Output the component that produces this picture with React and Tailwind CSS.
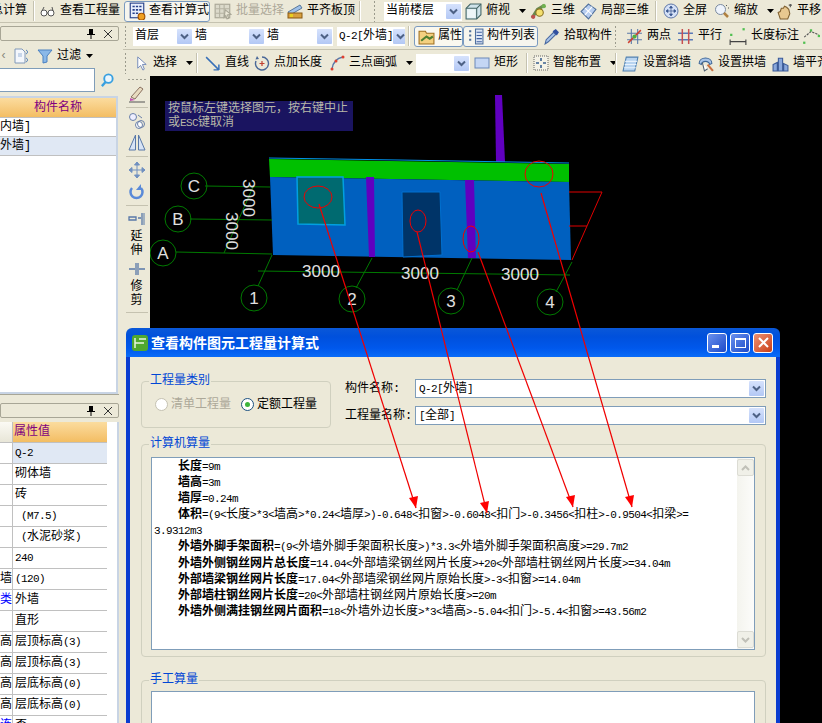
import React from "react";

const CJK = /([\u3000-\u9fff\uff00-\uffef]+)/;
function T({ s }) {
  return s.split(CJK).map((p, i) =>
    CJK.test(p) ? <span key={i}>{p}</span> : <span key={i} className="text-[11px] tracking-[-0.6px]">{p}</span>
  );
}

function Chev({ tall }) {
  return (
    <span className={`shrink-0 w-[15px] flex items-center justify-center bg-gradient-to-b from-[#d6e2fc] to-[#b3c8f5] rounded-[1px] ${tall ? "h-[16px]" : "h-[15px]"}`}>
      <svg width="9" height="7" viewBox="0 0 9 7"><path d="M1 1.5 L4.5 5 L8 1.5" fill="none" stroke="#4d6185" strokeWidth="2" /></svg>
    </span>
  );
}

function Sel({ w, children }) {
  return (
    <div className={`h-[19px] shrink-0 bg-white flex items-center justify-between pl-[2px] pr-[1px] overflow-hidden whitespace-nowrap ${w}`}>
      <span className="text-[12px]">{children}</span>
      <Chev />
    </div>
  );
}

function Grip() {
  return <div className="w-[3px] h-[22px] shrink-0 bg-[radial-gradient(circle,#9a9a8c_1px,transparent_1px)] bg-[length:3px_4px]" />;
}
function Sep() {
  return <div className="w-[2px] h-[20px] shrink-0 bg-[#c5c2b0] border-r border-white" />;
}
function Caret() {
  return <svg width="7" height="4" viewBox="0 0 7 4" className="shrink-0"><path d="M0 0H7L3.5 4Z" fill="#000" /></svg>;
}

const I = ({ children, s = 16 }) => <svg width={s} height={s} viewBox="0 0 16 16" className="shrink-0">{children}</svg>;

const Ic = {
  glasses: <I><circle cx="4" cy="10" r="3" fill="#fff" stroke="#555" /><circle cx="11" cy="10" r="3" fill="#fff" stroke="#555" /><path d="M7 10h1M2 8l2-4M13 8l-1-4" stroke="#555" fill="none" /></I>,
  calc: <I s={18}><rect x="2" y="1" width="12" height="13" fill="#e8eefc" stroke="#27408b" /><path d="M4 4h8M4 7h8M4 10h5" stroke="#27408b" strokeWidth="1.5" strokeDasharray="2 1" /><circle cx="12" cy="13" r="3" fill="#f0a020" stroke="#a05000" /></I>,
  batch: <I s={18}><rect x="1" y="2" width="13" height="12" fill="#dcdacb" stroke="#a8a696" /><path d="M1 6h13M1 10h13M5 2v12M9 2v12" stroke="#b5b3a3" /><path d="M10 7l5 4-3 .5 1 3-1.5.5-1-3-1.5 1.5Z" fill="#ece9d8" stroke="#a8a696" /></I>,
  align: <I><path d="M1 9 L13 2 L15 5 L3 12Z" fill="#9fc0e8" stroke="#58789c" /><rect x="1" y="10" width="14" height="5" fill="#d8a040" stroke="#8a5a10" /><rect x="3" y="11" width="3" height="3" fill="#e8d020" /></I>,
  top: <I s={17}><path d="M1 5 L5 1 H15 V11 L11 15 H1Z" fill="#cfe3ea" stroke="#466" /><path d="M1 5 H11 V15 M11 5 L15 1" fill="none" stroke="#466" /><rect x="2" y="6" width="8" height="8" fill="#eef6f8" /></I>,
  three: <I s={17}><path d="M2 14 L7 6 L14 2" stroke="#6a8a50" strokeWidth="3" fill="none" /><circle cx="9" cy="9" r="3.5" fill="#f4e070" stroke="#887020" /><circle cx="13" cy="3" r="2" fill="#70b050" /><circle cx="3" cy="13" r="2" fill="#c05050" /></I>,
  local: <I s={17}><path d="M8 1 L15 6 L8 15 L1 8Z" fill="#b8cef0" stroke="#50709c" /><path d="M4.5 4.5 L11.5 11 M11.5 3.5 L4.5 11.5" stroke="#fff" /></I>,
  full: <I s={16}><circle cx="8" cy="8" r="7" fill="#d4e0f6" stroke="#6078a8" /><path d="M8 3v10M3 8h10M8 3l-1.5 2h3ZM8 13l-1.5-2h3ZM3 8l2-1.5v3ZM13 8l-2-1.5v3Z" stroke="#3a5890" fill="#3a5890" strokeWidth=".7" /></I>,
  zoom: <I s={16}><circle cx="6.5" cy="6.5" r="5" fill="#eef3fb" stroke="#7a8aa0" /><path d="M10 10l4 4" stroke="#b08040" strokeWidth="2.5" /><path d="M12 2l1 1M14 5h1" stroke="#555" /></I>,
  pan: <I s={17}><path d="M4 15 L2 9 L4 8 L5 5 L7 5 L8 3 L10 4 L12 6 L13 10 L11 15Z" fill="#e8c890" stroke="#806030" /><path d="M12 2h3M13.500 1v3" stroke="#555" /></I>,
  prop: <I s={17}><path d="M1 3h6l1 2h7v10H1Z" fill="#f4d080" stroke="#a07020" /><path d="M3 12l5-4 3 2 3-2" stroke="#508030" strokeWidth="2" fill="none" /></I>,
  list: <I s={17}><path d="M2 3h2M2 7h2M2 11h2" stroke="#50709c" strokeWidth="2" /><rect x="8" y="1" width="7" height="14" fill="#dce6f6" stroke="#50709c" /><path d="M9 4h5M9 7h5M9 10h5M9 13h5" stroke="#4060a0" /></I>,
  pick: <I s={17}><path d="M2 15 L3 11 L10 4 L12 6 L5 13Z" fill="#a8c4ea" stroke="#4868a0" /><path d="M9 3 L13 7 L15 4 L12 1Z" fill="#3050a0" /></I>,
  two: <I s={17}><path d="M1 5h14M1 11h14M5 1v14M11 1v14" stroke="#5878a8" /><path d="M2 14 L14 2" stroke="#d04030" strokeWidth="1.4" /><circle cx="8" cy="8" r="2" fill="#50b040" /></I>,
  para: <I s={17}><path d="M1 5h14M1 11h14" stroke="#5878b8" strokeWidth="1.4" /><path d="M5 1v14M11 1v14" stroke="#c85050" strokeWidth="1.4" /></I>,
  dim: <I s={18}><path d="M1 13h14M1 11v5M15 11v5" stroke="#444" /><rect x="1" y="6" width="2" height="2" fill="#50c050" /><rect x="12" y="1" width="2" height="2" fill="#50c050" /></I>,
  dim2: <I s={18}><path d="M2 9 L8 4 L15 7" stroke="#555" strokeDasharray="2 1" fill="none" /><rect x="1" y="13" width="2" height="2" fill="#50c050" /><rect x="7" y="2" width="2" height="2" fill="#50c050" /><rect x="14" y="7" width="2" height="2" fill="#50c050" /></I>,
  sel: <I s={15}><path d="M4 1 V13 L7 10 L9.500 15 L11 14 L9 9 H13Z" fill="#fff" stroke="#7088b8" /></I>,
  line: <I s={17}><path d="M2 2 L14 14 M14 14v-5M14 14h-5" stroke="#3870b8" strokeWidth="1.4" fill="none" /></I>,
  ptl: <I s={16}><path d="M8 2a6.500 6.500 0 1 1-6 4" fill="none" stroke="#4a6898" strokeWidth="1.4" /><path d="M3 1l2 3-3.500.5Z" fill="#4a6898" /><path d="M8 6v5M5.500 8.500h5" stroke="#c04030" strokeWidth="1.2" /></I>,
  arc: <I s={16}><path d="M3 14 C4 7 8 3 14 2" fill="none" stroke="#5878a8" strokeWidth="1.4" /><circle cx="3" cy="14" r="1.500" fill="#e04030" /><circle cx="7" cy="6" r="1.500" fill="#e04030" /><circle cx="14" cy="2" r="1.500" fill="#e04030" /></I>,
  rect: <I s={16}><rect x="1" y="3" width="14" height="10" fill="#c4d6f4" stroke="#6a88b8" /></I>,
  smart: <I s={16}><rect x="1" y="1" width="14" height="14" fill="#f4f2e6" stroke="#666" strokeDasharray="1 1" /><path d="M8 3v3M8 10v3M3 8h3M10 8h3" stroke="#3a6090" strokeWidth="1.6" /></I>,
  slant: <I s={17}><path d="M1 15 L4 2 H15 L12 15Z" fill="#b8d4f0" stroke="#5080b0" /><path d="M3 6h11M2.500 9h11M2 12h11" stroke="#e8f2fc" /></I>,
  arch: <I s={17}><path d="M2 8 C2 1 14 1 14 8 L12 9 C11 5 5 5 4 9Z" fill="#a8c4e8" stroke="#406898" /><path d="M5 7 L7 15 L10 13" fill="#fff" stroke="#506070" /><path d="M10 9l5 6" stroke="#c87040" strokeWidth="2" /></I>,
  flush: <I s={17}><path d="M1 15V9l4-2v8ZM6 15V3h4v12ZM11 15V8l4 2v5Z" fill="#8aa8dc" stroke="#3a5a98" /></I>,
  copy: <I s={16}><path d="M2 1h7l3 3v11H2Z" fill="#f4f7fc" stroke="#8098b8" /><path d="M5 5h4v4H5Z" fill="#c8d6ea" /><path d="M13 2c2 1 2 3 0 4M13 10c2 1 2 3 0 4" stroke="#3a70b8" fill="none" /></I>,
  filter: <I s={16}><path d="M1 2h14L10 8v6l-4 1V8Z" fill="#8ab8e8" stroke="#4a80c0" /></I>,
  search: <I s={15}><circle cx="9" cy="6" r="4.500" fill="#eaf6fe" stroke="#38a0e0" strokeWidth="2" /><path d="M6 9.500 L2 14" stroke="#38a0e0" strokeWidth="2.5" /></I>,
};

function Tool({ icon, children, gray, w, caret }) {
  return (
    <div className={`h-[20px] shrink-0 flex items-center gap-[4px] whitespace-nowrap text-[12px] ${gray ? "text-[#aca899]" : "text-black"} ${w}`}>
      {icon}
      <span>{children}</span>
      {caret && <span className="ml-[5px] flex"><Caret /></span>}
    </div>
  );
}
function Active({ icon, children, w, warm }) {
  return (
    <div className={`h-[21px] shrink-0 flex items-center gap-[3px] px-[3px] rounded-[3px] border border-[#7a9ac0] whitespace-nowrap text-[12px] ${warm ? "bg-[#faf8ef]" : "bg-[#f6f5ee]"} ${w}`}>
      {icon}
      <span>{children}</span>
    </div>
  );
}

function PanelHead() {
  return (
    <div className="h-[15px] shrink-0 flex items-center justify-end gap-[9px] pr-[6px] bg-[#ece9d8] border border-[#a8a696] rounded-[2px]">
      <svg width="8" height="10" viewBox="0 0 8 10"><path d="M2 0h4v5h2v1H4.500v4h-1V6H0V5h2Z" fill="#000" /></svg>
      <svg width="8" height="8" viewBox="0 0 8 8"><path d="M0 0L8 8M8 0L0 8" stroke="#333" /></svg>
    </div>
  );
}

const propRows = [
  ["", "Q-2", true],
  ["", "砌体墙"],
  ["", "砖"],
  ["", " (M7.5)"],
  ["", " (水泥砂浆)"],
  ["", "240"],
  ["墙", "(120)"],
  ["类", "外墙", false, true],
  ["", "直形"],
  ["高", "层顶标高(3)"],
  ["高", "层顶标高(3)"],
  ["高", "层底标高(0)"],
  ["高", "层底标高(0)"],
  ["连", "否", false, true],
];

function LeftPanel() {
  return (
    <div className="w-[120px] shrink-0 flex flex-col pr-[1px] pt-[3px]">
      <PanelHead />
      <div className="h-[354px] shrink-0 flex flex-col border-b border-[#a8a696]">
        <div className="h-[25px] flex items-center shrink-0 pt-[4px]">
          <span className="w-[13px] text-[#8a8a80] text-[12px] leading-none">‹</span>
          <span className="w-[24px] flex">{Ic.copy}</span>
          {Ic.filter}
          <span className="ml-[4px] text-[12px]">过滤</span>
          <span className="ml-[5px] flex"><Caret /></span>
        </div>
        <div className="flex items-center h-[24px] shrink-0 mt-[2px]">
          <div className="w-[95px] h-[24px] bg-white border border-[#7f9db9] border-l-0" />
          <span className="ml-[5px] flex">{Ic.search}</span>
        </div>
        <div className="mt-[4px] w-[118px] flex-1 bg-white border-2 border-l-0 border-[#c8d4e4] flex flex-col">
          <div className="h-[20px] shrink-0 bg-gradient-to-b from-[#fbdc9e] to-[#f3bd62] text-[#800080] text-[12px] flex items-center justify-center border-b border-[#c0c0c0]">构件名称</div>
          <div className="h-[19px] shrink-0 text-[12px] flex items-center border-b border-[#c0c0c0] whitespace-nowrap">内墙]</div>
          <div className="h-[19px] shrink-0 text-[12px] flex items-center border-b border-[#c0c0c0] bg-[#e0e8f4] whitespace-nowrap">外墙]</div>
        </div>
      </div>
      <div className="mt-[8px]"><PanelHead /></div>
      <div className="flex-1 min-h-0 mt-[4px] bg-white border-r-2 border-[#c8d4e4] overflow-hidden">
        <div className="w-[107px] flex h-[21px] border-b border-[#c0c0c0] text-[12px]">
          <div className="w-[13px] shrink-0 bg-gradient-to-b from-[#fbfaf4] to-[#e8e6d8] border-r border-[#c0c0c0]" />
          <div className="flex-1 bg-gradient-to-b from-[#fbdc9e] to-[#f3bd62] text-[#800080] flex items-center pl-[1px]">属性值</div>
        </div>
        {propRows.map(([a, b, sel, blue], i) => (
          <div key={i} className="w-[107px] flex h-[21px] border-b border-[#c0c0c0] text-[12px] overflow-hidden">
            <div className={`w-[13px] shrink-0 border-r border-[#c0c0c0] flex items-center justify-end overflow-hidden ${blue ? "text-[#0000ff]" : "text-black"}`}>{a}</div>
            <div className={`flex-1 flex items-center pl-[2px] whitespace-pre ${sel ? "bg-[#e0e8f4]" : ""}`}><span><T s={b} /></span></div>
          </div>
        ))}
      </div>
    </div>
  );
}

function VBar() {
  const D = () => <div className="w-[22px] h-[1px] bg-[#c5c2b0] shrink-0" />;
  return (
    <div className="w-[27px] shrink-0 flex flex-col items-center pt-[2px] gap-[4px] text-[12px] leading-[14px]">
      <div className="h-[3px] w-[20px] bg-[radial-gradient(circle,#9a9a8c_1px,transparent_1px)] bg-[length:4px_3px]" />
      <svg width="18" height="18" viewBox="0 0 18 18"><path d="M3 12 L12 2 L15 4 L7 14Z" fill="#e8dcc0" stroke="#8a7060" /><path d="M2 13 L7 15 L2 16Z" fill="#c050b0" /><path d="M1 17h16" stroke="#555" /></svg>
      <D />
      <svg width="18" height="18" viewBox="0 0 18 18"><circle cx="5" cy="5" r="3.500" fill="#eef" stroke="#6a80a8" /><circle cx="11" cy="13" r="3.500" fill="#fff" stroke="#6a80a8" /><circle cx="13" cy="12" r="3.500" fill="none" stroke="#6a80a8" /><path d="M10 3l4 3" stroke="#6a80a8" /></svg>
      <svg width="18" height="18" viewBox="0 0 18 18"><path d="M7.500 1 V16 H1ZM10.500 1 V16 H17Z" fill="#d8e4f6" stroke="#5878a8" /></svg>
      <D />
      <svg width="18" height="18" viewBox="0 0 18 18"><path d="M9 1v16M1 9h16M9 1l-2.500 3h5ZM9 17l-2.500-3h5ZM1 9l3-2.500v5ZM17 9l-3-2.500v5Z" fill="#7090c0" stroke="#7090c0" /></svg>
      <svg width="18" height="18" viewBox="0 0 18 18"><path d="M4 5a6 6 0 1 0 9-0" fill="none" stroke="#5a8ad8" strokeWidth="2.5" /><path d="M13 1v6h-5Z" fill="#5a8ad8" /></svg>
      <D />
      <svg width="18" height="14" viewBox="0 0 18 14" className="mt-[2px]"><path d="M1 5h7v3H1ZM10 6h3M14 1v12" stroke="#5878a8" fill="none" strokeWidth="1.300" /><path d="M16 1v12" stroke="#5878a8" /></svg>
      <div className="text-center w-[14px]">延伸</div>
      <svg width="18" height="14" viewBox="0 0 18 14"><path d="M1 7h6M11 7h6M8 1v12M10 1v12" stroke="#5878a8" strokeWidth="1.300" /></svg>
      <div className="text-center w-[14px]">修剪</div>
      <D />
    </div>
  );
}

function Canvas() {
  const green = "#007a00";
  const labels = [["C", 194, 186], ["B", 178, 219], ["A", 163, 253], ["1", 254, 298], ["2", 352, 299], ["3", 451, 301], ["4", 550, 302]];
  return (
    <div className="relative flex-1 bg-black">
      <div className="absolute left-[15px] top-[25px] w-[188px] h-[30px] bg-[#1a1460] text-[#b8b8a8] text-[12px] leading-[14px] pl-[3px] pt-[1px]">
        按鼠标左键选择图元，按右键中止<br />或<span className="text-[11px] tracking-[-0.6px]">ESC</span>键取消
      </div>
      <svg className="absolute left-0 top-0" width="672" height="647" viewBox="150 76 672 647">
        <path d="M495 95H502L505 162H496Z" fill="#6000c0" />
        <path d="M269 159L569 164V182L270 177Z" fill="#00c000" />
        <path d="M269 158L400 160L569 163" fill="none" stroke="#0090e8" />
        <path d="M270 177L569 182L571 260L273 255Z" fill="#0060bf" />
        <path d="M366 177H374L375 257H369Z" fill="#6000c0" />
        <path d="M465 180H474L476 258H468Z" fill="#6000c0" />
        <path d="M297 177H343L345 225L298 224Z" fill="#006a70" stroke="#00a0e0" strokeWidth="1.500" />
        <path d="M402 192H440L442 255L403 257Z" fill="#003468" stroke="#0070d0" />
        <path d="M569 192H602L572 260M569 226H587" fill="none" stroke="#e00000" />
        <path d="M205 186L270 187M190 219L272 220M176 252L272 254M258 286L272 255M356 288L372 258M457 290L472 258M556 292L572 262M258 271L570 275M224 253L253 187" stroke={green} fill="none" />
        {labels.map(([t, x, y]) => (
          <g key={t}>
            <circle cx={x} cy={y} r="13" fill="none" stroke={green} />
            <text x={x} y={y + 6} textAnchor="middle" fontSize="17" fill="#e0e0e0" fontFamily="Liberation Sans">{t}</text>
          </g>
        ))}
        {[[321, 277], [420, 279], [520, 280]].map(([x, y]) => (
          <text key={x} x={x} y={y} textAnchor="middle" fontSize="17" fill="#e0e0e0" fontFamily="Liberation Sans">3000</text>
        ))}
        <text transform="translate(226 231) rotate(90)" textAnchor="middle" fontSize="17" fill="#e0e0e0" fontFamily="Liberation Sans">3000</text>
        <text transform="translate(243 198) rotate(90)" textAnchor="middle" fontSize="17" fill="#e0e0e0" fontFamily="Liberation Sans">3000</text>
      </svg>
    </div>
  );
}

function Radio({ on, children }) {
  return (
    <div className={`flex items-center gap-[3px] text-[12px] ${on ? "text-black" : "text-[#aca899]"}`}>
      <span className={`w-[13px] h-[13px] rounded-full bg-white border flex items-center justify-center ${on ? "border-[#1c5180]" : "border-[#c5c2b2]"}`}>
        {on && <span className="w-[5px] h-[5px] rounded-full bg-[#3cb43c]" />}
      </span>
      {children}
    </div>
  );
}

function Group({ label, className, children }) {
  return (
    <div className={`relative border border-[#d0d0bf] rounded-[4px] ${className}`}>
      <span className="absolute left-[7px] top-[-8px] bg-[#ece9d8] text-[#0046d5] text-[12px] leading-[14px] px-[1px]">{label}</span>
      {children}
    </div>
  );
}

function DSelect({ children }) {
  return (
    <div className="w-[351px] h-[19px] bg-white border border-[#7f9db9] flex items-center justify-between pl-[3px] pr-[1px] text-[12px]">
      <span><T s={children} /></span>
      <Chev />
    </div>
  );
}

const calcLines = [
  ["长度", "=9m"],
  ["墙高", "=3m"],
  ["墙厚", "=0.24m"],
  ["体积", "=(9<长度>*3<墙高>*0.24<墙厚>)-0.648<扣窗>-0.6048<扣门>-0.3456<扣柱>-0.9504<扣梁>="],
  ["", "3.9312m3"],
  ["外墙外脚手架面积", "=(9<外墙外脚手架面积长度>)*3.3<外墙外脚手架面积高度>=29.7m2"],
  ["外墙外侧钢丝网片总长度", "=14.04<外部墙梁钢丝网片长度>+20<外部墙柱钢丝网片长度>=34.04m"],
  ["外部墙梁钢丝网片长度", "=17.04<外部墙梁钢丝网片原始长度>-3<扣窗>=14.04m"],
  ["外部墙柱钢丝网片长度", "=20<外部墙柱钢丝网片原始长度>=20m"],
  ["外墙外侧满挂钢丝网片面积", "=18<外墙外边长度>*3<墙高>-5.04<扣门>-5.4<扣窗>=43.56m2"],
];

function Dialog() {
  const btn = "w-[20px] h-[20px] rounded-[3px] border border-white flex items-center justify-center";
  return (
    <div className="absolute left-[126px] top-[328px] w-[654px] h-[395px] flex flex-col">
      <div className="h-[29px] shrink-0 rounded-t-[6px] bg-[linear-gradient(#0a58d8,#0050dc_30%,#0058ec_70%,#0a6cf8)] flex items-center pl-[6px] pr-[6px]">
        <svg width="16" height="16" viewBox="0 0 16 16"><rect width="16" height="16" rx="3" fill="#50a830" /><path d="M3 3v10M3 8h9M7 4h7" stroke="#e8f4e0" strokeWidth="1.500" /></svg>
        <span className="ml-[3px] pt-[3px] text-white text-[14px] leading-[16px] font-bold flex-1 whitespace-nowrap">查看构件图元工程量计算式</span>
        <div className="flex gap-[3px] mr-[1px]">
          <div className={`${btn} bg-gradient-to-br from-[#6a90ee] to-[#1c48c8]`}><span className="w-[7px] h-[3px] bg-white mt-[8px] mr-[3px]" /></div>
          <div className={`${btn} bg-gradient-to-br from-[#6a90ee] to-[#1c48c8]`}><span className="w-[11px] h-[10px] border border-white border-t-2" /></div>
          <div className={`${btn} bg-gradient-to-br from-[#ee9070] to-[#c83c10]`}><svg width="11" height="11" viewBox="0 0 11 11"><path d="M1 1L10 10M10 1L1 10" stroke="#fff" strokeWidth="2" /></svg></div>
        </div>
      </div>
      <div className="flex-1 min-h-0 bg-[#ece9d8] border-x-[4px] border-x-[#0a3cd0] overflow-hidden pl-[11px]">
        <div className="flex mt-[24px]">
          <Group label="工程量类别" className="w-[190px] h-[47px] flex items-center pl-[13px] gap-[10px]">
            <Radio>清单工程量</Radio>
            <Radio on>定额工程量</Radio>
          </Group>
          <div className="ml-[14px] mt-[-2px] flex flex-col gap-[8px]">
            <div className="flex items-center text-[12px]"><span className="w-[70px]">构件名称:</span><DSelect>Q-2[外墙]</DSelect></div>
            <div className="flex items-center text-[12px]"><span className="w-[70px]">工程量名称:</span><DSelect>[全部]</DSelect></div>
          </div>
        </div>
        <Group label="计算机算量" className="w-[625px] h-[213px] mt-[16px] pl-[9px] pt-[12px]">
          <div className="w-[604px] h-[193px] bg-white border border-[#7f9db9] flex">
            <div className="flex-1 min-w-0 pl-[2px] pt-[1px] text-[12px] leading-[16px] whitespace-nowrap overflow-hidden text-black">
              {calcLines.map(([b, r], i) => (
                <div key={i} className={`h-[16.1px] ${b ? "pl-[24px]" : ""}`}>
                  {b && <span className="font-bold">{b}</span>}
                  <T s={r} />
                </div>
              ))}
            </div>
            <div className="w-[17px] shrink-0 bg-gradient-to-r from-[#f4f4ee] to-[#fcfcfa] flex flex-col justify-between py-[1px]">
              <div className="h-[17px] bg-[#f0f0e8] border border-[#dcdcd4] rounded-[2px] flex items-center justify-center"><svg width="9" height="6" viewBox="0 0 9 6"><path d="M1 5L4.500 1.500L8 5" fill="none" stroke="#c0c0b8" strokeWidth="2" /></svg></div>
              <div className="h-[17px] bg-[#f0f0e8] border border-[#dcdcd4] rounded-[2px] flex items-center justify-center"><svg width="9" height="6" viewBox="0 0 9 6"><path d="M1 1L4.500 4.500L8 1" fill="none" stroke="#c0c0b8" strokeWidth="2" /></svg></div>
            </div>
          </div>
        </Group>
        <Group label="手工算量" className="w-[625px] h-[70px] mt-[23px] pl-[9px] pt-[10px]">
          <div className="w-[604px] h-[60px] bg-white border border-[#7f9db9]" />
        </Group>
      </div>
    </div>
  );
}

function Arrows() {
  const lines = [
    [319, 204, 416, 508],
    [417, 232, 487, 513],
    [478, 252, 573, 507],
    [541, 193, 632, 507],
  ];
  return (
    <svg className="absolute left-0 top-0 pointer-events-none" width="822" height="723" viewBox="0 0 822 723">
      {lines.map(([x1, y1, x2, y2], i) => (
        <g key={i}>
          <path d={`M${x1} ${y1}L${x2} ${y2}`} stroke="#f00000" strokeWidth="1.200" />
          <path d={`M${x2} ${y2}l-7 -10l9 -2Z`} fill="#ff0000" />
        </g>
      ))}
      <ellipse cx="318" cy="197" rx="14" ry="11" fill="none" stroke="#f00000" />
      <ellipse cx="418" cy="221" rx="8" ry="11" fill="none" stroke="#f00000" />
      <ellipse cx="471" cy="239" rx="8" ry="13" fill="none" stroke="#f00000" />
      <ellipse cx="539" cy="174" rx="14" ry="13" fill="none" stroke="#f00000" />
    </svg>
  );
}

export default function App() {
  return (
    <div className="relative w-[822px] h-[723px] overflow-hidden bg-[#ece9d8] text-black font-['Liberation_Mono','Noto_Sans_CJK_SC',sans-serif] flex flex-col">
      <div className="h-[23px] shrink-0 flex items-center border-b border-[#c5c2b0] overflow-hidden">
        <div className="w-[33px] shrink-0 overflow-hidden"><div className="ml-[-9px] text-[12px] whitespace-nowrap">总计算</div></div>
        <Sep />
        <div className="w-[5px] shrink-0" />
        <Tool icon={Ic.glasses} w="w-[84px]">查看工程量</Tool>
        <Active icon={Ic.calc} w="w-[86px]">查看计算式</Active>
        <div className="w-[4px] shrink-0" />
        <Tool icon={Ic.batch} gray w="w-[73px]">批量选择</Tool>
        <Tool icon={Ic.align} w="w-[72px]">平齐板顶</Tool>
        <Sep />
        <div className="w-[15px] shrink-0 flex justify-end"><Grip /></div>
        <div className="w-[8px] shrink-0" />
        <Sel w="w-[78px]">当前楼层</Sel>
        <div className="w-[3px] shrink-0" />
        <Tool icon={Ic.top} w="w-[65px]" caret>俯视</Tool>
        <Tool icon={Ic.three} w="w-[50px]">三维</Tool>
        <Tool icon={Ic.local} w="w-[75px]">局部三维</Tool>
        <Sep />
        <div className="w-[6px] shrink-0" />
        <Tool icon={Ic.full} w="w-[51px]">全屏</Tool>
        <Tool icon={Ic.zoom} w="w-[62px]" caret>缩放</Tool>
        <Tool icon={Ic.pan} w="w-[60px]">平移</Tool>
      </div>
      <div className="flex-1 min-h-0 flex">
        <LeftPanel />
        <div className="flex-1 min-w-0 flex flex-col pl-[3px]">
          <div className="h-[27px] shrink-0 flex items-center border-b border-[#c5c2b0] overflow-hidden pl-[1px]">
            <Grip />
            <div className="w-[6px] shrink-0" />
            <Sel w="w-[60px]"><T s="首层" /></Sel>
            <Sel w="w-[72px]">墙</Sel>
            <Sel w="w-[68px]">墙</Sel>
            <div className="w-[4px] shrink-0" />
            <Sel w="w-[68px]"><T s="Q-2[外墙]" /></Sel>
            <div className="w-[3px] shrink-0" />
            <Sep />
            <div className="w-[4px] shrink-0" />
            <Active icon={Ic.prop} w="w-[49px]" warm>属性</Active>
            <Active icon={Ic.list} w="w-[75px]">构件列表</Active>
            <div className="w-[5px] shrink-0" />
            <Tool icon={Ic.pick} w="w-[68px]">拾取构件</Tool>
            <div className="w-[8px] shrink-0 flex justify-center"><Grip /></div>
            <div className="w-[7px] shrink-0" />
            <Tool icon={Ic.two} w="w-[51px]">两点</Tool>
            <Tool icon={Ic.para} w="w-[52px]">平行</Tool>
            <Tool icon={Ic.dim} w="w-[73px]">长度标注</Tool>
            {Ic.dim2}
          </div>
          <div className="h-[26px] shrink-0 flex items-center overflow-hidden pl-[1px]">
            <Grip />
            <div className="w-[7px] shrink-0" />
            <Tool icon={Ic.sel} w="w-[62px]" caret>选择</Tool>
            <Sep />
            <div className="w-[6px] shrink-0" />
            <Tool icon={Ic.line} w="w-[50px]">直线</Tool>
            <Tool icon={Ic.ptl} w="w-[75px]">点加长度</Tool>
            <Tool icon={Ic.arc} w="w-[87px]" caret>三点画弧</Tool>
            <Sel w="w-[54px]"> </Sel>
            <div className="w-[4px] shrink-0" />
            <Tool icon={Ic.rect} w="w-[52px]">矩形</Tool>
            <Sep />
            <div className="w-[5px] shrink-0" />
            <Tool icon={Ic.smart} w="w-[82px]" caret>智能布置</Tool>
            <Sep />
            <div className="w-[5px] shrink-0" />
            <Tool icon={Ic.slant} w="w-[75px]">设置斜墙</Tool>
            <Tool icon={Ic.arch} w="w-[75px]">设置拱墙</Tool>
            <Tool icon={Ic.flush} w="w-[60px]">墙平齐</Tool>
          </div>
          <div className="flex-1 min-h-0 flex">
            <VBar />
            <Canvas />
          </div>
        </div>
      </div>
      <Dialog />
      <Arrows />
    </div>
  );
}
